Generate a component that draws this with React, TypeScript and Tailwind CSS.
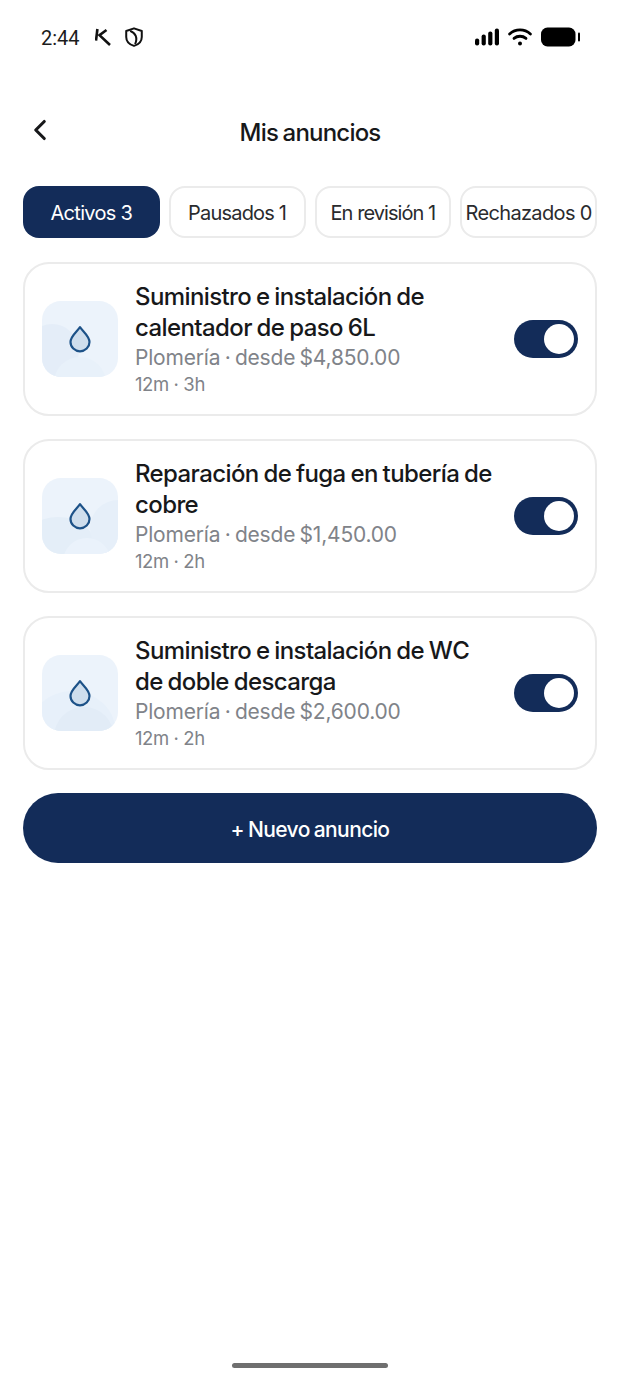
import React from 'react';
import { ChevronLeft } from 'lucide-react';

const font = 'font-["Inter","Liberation_Sans",sans-serif]';

const tabs = [
  { label: 'Activos 3', active: true, tracking: 'tracking-[-0.7px]' },
  { label: 'Pausados 1', active: false, tracking: 'tracking-[-0.8px]' },
  { label: 'En revisión 1', active: false, tracking: 'tracking-[-0.95px]' },
  { label: 'Rechazados 0', active: false, tracking: 'tracking-[-0.65px]' },
];

const ads = [
  { title: 'Suministro e instalación de calentador de paso 6L', sub: 'Plomería · desde $4,850.00', meta: '12m · 3h', blobs: 0 },
  { title: 'Reparación de fuga en tubería de cobre', sub: 'Plomería · desde $1,450.00', meta: '12m · 2h', blobs: 1 },
  { title: 'Suministro e instalación de WC de doble descarga', sub: 'Plomería · desde $2,600.00', meta: '12m · 2h', blobs: 2 },
];

function StatusBar() {
  return (
    <div className="mt-[18px] flex h-[38px] items-center justify-between pl-[41px] pr-[40px]">
      <div className="flex items-center">
        <span className="w-[39px] pt-[1px] text-[20px] leading-none text-[#1c1c1c] font-['Roboto',sans-serif]">2:44</span>
        <svg className="ml-[15px]" width="16" height="18" viewBox="0 0 16 18" fill="none" stroke="#111" strokeWidth="2.6">
          <path d="M2.4 1 L1 12.5" />
          <path d="M11.5 2 L4.5 7.2 L15 17" />
        </svg>
        <svg className="ml-[14px]" width="18" height="20" viewBox="0 0 16 18" fill="none" stroke="#111" strokeWidth="1.8">
          <path d="M8 1.2 L15 3.6 V9 C15 13 12 15.8 8 17 C4 15.8 1 13 1 9 V3.6 Z" strokeLinejoin="round" />
          <path d="M4.5 3.5 C9.5 5.5 11.5 9.5 9 15.5" />
        </svg>
      </div>
      <div className="flex items-center">
        <svg width="24" height="18" viewBox="0 0 24 18" fill="#000">
          <rect x="0" y="10.5" width="4.2" height="7" rx="2" />
          <rect x="6.6" y="6.5" width="4.2" height="11" rx="2" />
          <rect x="13.2" y="3.5" width="4.2" height="14" rx="2" />
          <rect x="19.8" y="0.5" width="4.2" height="17" rx="2" />
        </svg>
        <svg className="ml-[9px]" width="24" height="18" viewBox="0 0 24 18" fill="none" stroke="#000" strokeWidth="2.8" strokeLinecap="round">
          <path d="M1.6 6 C7.5 0.6 16.5 0.6 22.4 6" />
          <path d="M6 10.4 C9.5 7.5 14.5 7.5 18 10.4" />
          <circle cx="12" cy="15.6" r="2" fill="#000" stroke="none" />
        </svg>
        <svg className="ml-[9px]" width="39" height="20" viewBox="0 0 39 20" fill="#000">
          <rect x="0" y="0.5" width="34.5" height="19" rx="6.5" />
          <rect x="37" y="5.5" width="2" height="9" rx="1" />
        </svg>
      </div>
    </div>
  );
}

function Thumb({ variant }: { variant: number }) {
  return (
    <div className="relative flex h-[76px] w-[76px] shrink-0 items-center justify-center overflow-hidden rounded-[19px] bg-[#ecf3fb]">
      <svg className="absolute inset-0" width="76" height="76" viewBox="0 0 76 76">
        {variant === 0 && (
          <>
            <circle cx="10" cy="50" r="27" fill="#e4edf8" />
            <circle cx="38" cy="82" r="26" fill="#e8f1fa" />
          </>
        )}
        {variant === 1 && (
          <>
            <ellipse cx="16" cy="70" rx="38" ry="31" fill="#e4eef8" />
            <circle cx="76" cy="50" r="28" fill="#e6eff9" />
            <circle cx="45" cy="84" r="24" fill="#eaf2fb" />
          </>
        )}
        {variant === 2 && (
          <>
            <ellipse cx="30" cy="78" rx="44" ry="42" fill="#e7f0fa" />
            <circle cx="42" cy="82" r="30" fill="#e2ecf7" />
          </>
        )}
      </svg>
      <svg className="relative" width="24" height="28" viewBox="0 0 24 28" fill="#cfdeed" stroke="#1d5288" strokeWidth="2.2">
        <path d="M12 2.2 C14.5 6 21.5 11.2 21.5 17 A9.5 9.3 0 0 1 2.5 17 C2.5 11.2 9.5 6 12 2.2 Z" strokeLinejoin="round" />
      </svg>
    </div>
  );
}

function Toggle() {
  return (
    <div className="flex h-[38px] w-[64px] shrink-0 items-center justify-end rounded-full bg-[#132c59] pr-[4px]">
      <div className="h-[30px] w-[30px] rounded-full bg-white" />
    </div>
  );
}

function AdCard({ title, sub, meta, blobs }: { title: string; sub: string; meta: string; blobs: number }) {
  return (
    <div className="flex h-[154px] items-center rounded-[26px] border-2 border-[#ebebeb] pl-[17px] pr-[17px]">
      <Thumb variant={blobs} />
      <div className="ml-[17px] min-w-0 flex-1">
        <div className="w-[365px] text-[24px] leading-[31px] font-medium tracking-[-0.6px] [word-spacing:-1px] text-[#17181a]">{title}</div>
        <div className="mt-[1px] text-[21px] leading-[27px] tracking-[-0.2px] [word-spacing:-1.3px] text-[#808389]">{sub}</div>
        <div className="text-[18.5px] leading-[26px] tracking-[-0.4px] text-[#808389]">{meta}</div>
      </div>
      <Toggle />
    </div>
  );
}

export default function App() {
  return (
    <div className={`flex h-[1383px] w-[620px] flex-col overflow-hidden bg-white ${font}`}>
      <StatusBar />

      <div className="relative mt-[56px] flex h-[40px] items-center justify-center">
        <ChevronLeft className="absolute left-[23px] top-[1px] text-[#17181a]" size={34} strokeWidth={2.2} />
        <span className="pt-[1px] text-[24px] font-medium tracking-[-0.8px] [word-spacing:-1px] text-[#17181a]">Mis anuncios</span>
      </div>

      <div className="mt-[34px] flex gap-[9px] px-[23px]">
        {tabs.map((t) => (
          <div
            key={t.label}
            className={
              t.active
                ? `flex h-[52px] w-[137px] items-center justify-center rounded-[16px] bg-[#132c59] pt-[2px] text-[20px] text-white ${t.tracking}`
                : `flex h-[52px] w-[137px] items-center justify-center whitespace-nowrap rounded-[16px] border-2 border-[#ebebeb] pt-[2px] text-[20px] text-[#2a2b2e] ${t.tracking}`
            }
          >
            {t.label}
          </div>
        ))}
      </div>

      <div className="mt-[24px] flex flex-col gap-[23px] px-[23px]">
        {ads.map((ad) => (
          <AdCard key={ad.title} {...ad} />
        ))}
      </div>

      <div className="mx-[23px] mt-[23px] flex h-[70px] items-center justify-center rounded-full bg-[#132c59] pt-[3px] text-[21px] font-medium tracking-[-0.6px] [word-spacing:-1px] text-white">
        + Nuevo anuncio
      </div>

      <div className="mt-auto mb-[15px] h-[5px] w-[156px] self-center rounded-full bg-[#6f6f6f]" />
    </div>
  );
}
